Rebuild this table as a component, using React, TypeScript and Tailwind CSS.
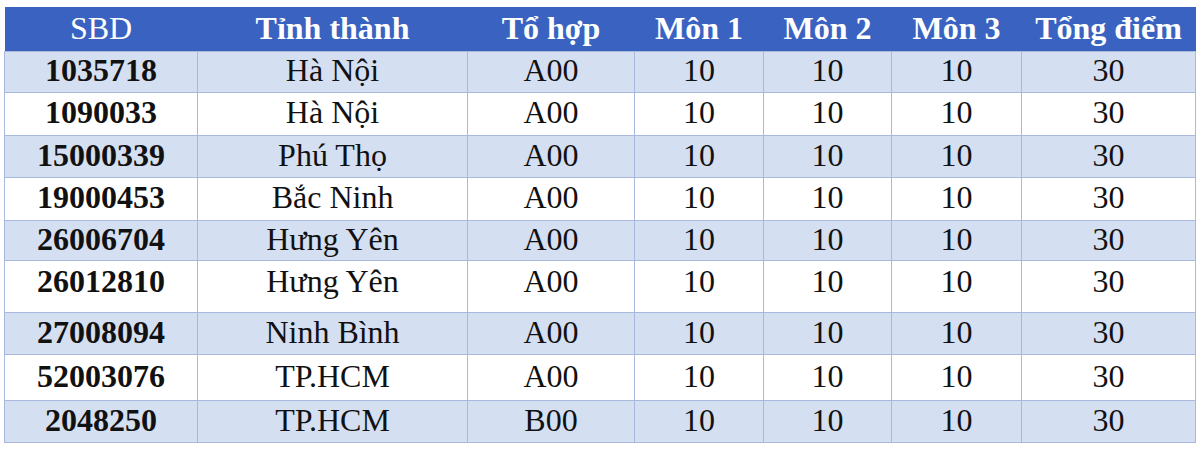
// Bảng điểm thí sinh đạt 30 điểm — recreated as a plain striped table

const columns = [
  { label: "SBD", width: "w-[193px]", bold: false },
  { label: "Tỉnh thành", width: "w-[270px]", bold: true },
  { label: "Tổ hợp", width: "w-[167px]", bold: true },
  { label: "Môn 1", width: "w-[129px]", bold: true },
  { label: "Môn 2", width: "w-[128px]", bold: true },
  { label: "Môn 3", width: "w-[130px]", bold: true },
  { label: "Tổng điểm", width: "w-[174px]", bold: true },
];

interface Row {
  sbd: string;
  tinh: string;
  toHop: string;
  height: string;
  pad: string;
}

const rows: Row[] = [
  { sbd: "1035718", tinh: "Hà Nội", toHop: "A00", height: "h-[41px]", pad: "pb-[3px]" },
  { sbd: "1090033", tinh: "Hà Nội", toHop: "A00", height: "h-[43px]", pad: "pb-[3px]" },
  { sbd: "15000339", tinh: "Phú Thọ", toHop: "A00", height: "h-[42px]", pad: "pb-[3px]" },
  { sbd: "19000453", tinh: "Bắc Ninh", toHop: "A00", height: "h-[43px]", pad: "pb-[3px]" },
  { sbd: "26006704", tinh: "Hưng Yên", toHop: "A00", height: "h-[40px]", pad: "pb-[3px]" },
  { sbd: "26012810", tinh: "Hưng Yên", toHop: "A00", height: "h-[52px]", pad: "pb-[10px]" },
  { sbd: "27008094", tinh: "Ninh Bình", toHop: "A00", height: "h-[42px]", pad: "pb-[3px]" },
  { sbd: "52003076", tinh: "TP.HCM", toHop: "A00", height: "h-[46px]", pad: "pb-[3px]" },
  { sbd: "2048250", tinh: "TP.HCM", toHop: "B00", height: "h-[42px]", pad: "pb-[3px]" },
];

export default function App() {
  return (
    <div className="w-[1200px] h-[449px] bg-white pl-[4px] pt-[7px] font-['Liberation_Serif',_'Times_New_Roman',serif] text-[32px] text-[#111111]">
      <table className="table-fixed border-collapse w-[1191px]">
        <thead>
          <tr className="h-[44px] bg-[#3a63c1] text-white">
            {columns.map((c) => (
              <th
                key={c.label}
                className={`${c.width} p-0 pb-[2px] text-center leading-none ${c.bold ? "font-bold" : "font-normal"}`}
              >
                {c.label}
              </th>
            ))}
          </tr>
        </thead>
        <tbody>
          {rows.map((r, i) => {
            const cells = [r.sbd, r.tinh, r.toHop, "10", "10", "10", "30"];
            return (
              <tr
                key={r.sbd}
                className={`${r.height} ${i % 2 === 0 ? "bg-[#d4dff2]" : "bg-white"}`}
              >
                {cells.map((v, j) => (
                  <td
                    key={j}
                    className={`p-0 ${r.pad} text-center leading-none border border-[#a9b9de] ${j === 0 ? "font-bold" : "font-normal"}`}
                  >
                    {v}
                  </td>
                ))}
              </tr>
            );
          })}
        </tbody>
      </table>
    </div>
  );
}
